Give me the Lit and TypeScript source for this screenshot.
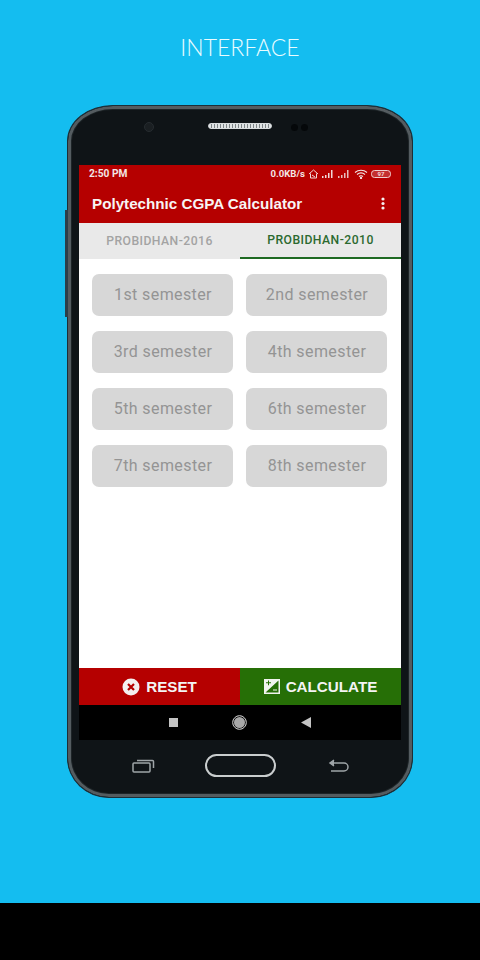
import { LitElement, html, css } from "lit";
import { customElement } from "lit/decorators.js";

const semesters = ["1st","2nd","3rd","4th","5th","6th","7th","8th"];

@customElement("app-root")
export class AppRoot extends LitElement {
  static styles = css`
    :host { display: block; width: 480px; height: 960px; font-family: Roboto, "Liberation Sans", sans-serif; overflow: hidden; }
    .page { height: 903px; background: #14bdf0; display: flex; flex-direction: column; align-items: center; }
    .foot { height: 57px; background: #000; }
    h1 { margin: 35px 0 0; font: 300 23px/25px Lato, "Open Sans", sans-serif; color: #eafcff; letter-spacing: 0; }
    .phone { position: relative; margin-top: 45px; width: 346px; height: 693px; box-sizing: border-box; border-radius: 46px 46px 42px 42px / 36px 36px 40px 40px; background: #0f1417; border: 1px solid #1d2e37; box-shadow: inset 0 0 0 3px #545c60, inset 0 0 0 4px #1d2427; display: flex; flex-direction: column; padding: 0 11px; }
    .side { position: absolute; width: 3px; background: #2c3f49; }
    .side.l { left: -3px; top: 104px; height: 107px; }
    .bezel-top { height: 59px; position: relative; display: flex; justify-content: center; }
    .cam { position: absolute; left: 65px; top: 16px; width: 10px; height: 10px; border-radius: 50%; background: #1a1f22; border: 1px solid #262c30; box-sizing: border-box; }
    .speaker { margin-top: 17px; width: 64px; height: 6px; border-radius: 3px; background: repeating-linear-gradient(90deg, #dfe3e4 0 2px, #7d8487 2px 3px); border: 1px solid #d8dcde; box-sizing: border-box; }
    .sensors { position: absolute; left: 212px; top: 18px; display: flex; gap: 3px; }
    .sensors i { width: 7px; height: 7px; border-radius: 50%; background: #05080a; }
    .screen { height: 575px; display: flex; flex-direction: column; background: #fff; }
    .status { height: 25px; background: #b50000; color: #f3e5e5; display: flex; align-items: center; justify-content: space-between; padding: 0 10px 8px; box-sizing: border-box; font-size: 10.2px; font-weight: 700; }
    .stat-r { display: flex; align-items: center; gap: 3px; font-size: 9.6px; }
    .appbar { height: 33px; background: #b50000; color: #f8f4f4; display: flex; align-items: center; justify-content: space-between; padding: 0 16px 6px 13px; box-sizing: border-box; font: 700 15.2px "Liberation Sans", sans-serif; }
    .tabs { height: 36px; display: flex; background: #e9e9e9; }
    .tab { flex: 1; display: flex; align-items: center; justify-content: center; font-size: 12.2px; font-weight: 500; letter-spacing: 0.45px; color: #a3a3a3; box-sizing: border-box; }
    .tab.on { color: #2c6a30; border-bottom: 2px solid #1f6a22; }
    .grid { flex: 1; display: grid; grid-template-columns: 141px 141px; grid-auto-rows: 42px; gap: 15px 13px; padding: 15px 13px 0; align-content: start; }
    .btn { background: #d7d7d7; border-radius: 7px; display: flex; align-items: center; justify-content: center; padding: 0 0 2px 1px; box-sizing: border-box; color: #949494; font-size: 16px; letter-spacing: 0.4px; }
    .actions { height: 37px; display: flex; }
    .act { flex: 1; display: flex; align-items: center; justify-content: center; gap: 6px; color: #f4f4f4; font: 700 15.2px "Liberation Sans", sans-serif; }
    .act.red { background: #b50000; }
    .act.green { background: #266f06; }
    .nav { height: 35px; background: #000; display: flex; align-items: center; justify-content: center; gap: 54px; box-sizing: border-box; }
    .bezel-bottom { flex: 1; display: flex; align-items: center; justify-content: center; padding-bottom: 6px; position: relative; }
    .home { width: 71px; height: 23px; border-radius: 12px; border: 2px solid #c9cdce; box-sizing: border-box; margin: 0 52px 0 50px; }
    svg { display: block; }
  `;

  render() {
    return html`
      <div class="page">
        <h1>INTERFACE</h1>
        <div class="phone">
          <span class="side l"></span>
          <div class="bezel-top">
            <span class="cam"></span><span class="speaker"></span>
            <span class="sensors"><i></i><i></i></span>
          </div>
          <div class="screen">
            <div class="status">
              <span>2:50 PM</span>
              <span class="stat-r">0.0KB/s
                <svg width="11" height="10" viewBox="0 0 11 10" fill="none" stroke="#f0d8d8" stroke-width="1"><path d="M1 5 5.500 1 10 5M2.500 4.500V9h6V4.500M4 6l3 2"/></svg>
                <svg width="13" height="8" viewBox="0 0 13 8" fill="#f0d8d8"><rect x="0" y="6" width="1.500" height="2"/><rect x="3" y="5" width="1.500" height="3"/><rect x="6" y="3" width="1.500" height="5"/><rect x="9" y="0" width="1.500" height="8"/></svg>
                <svg width="13" height="8" viewBox="0 0 13 8" fill="#e6bcbc"><rect x="0" y="6" width="1.500" height="2"/><rect x="3" y="5" width="1.500" height="3"/><rect x="6" y="3" width="1.500" height="5"/><rect x="9" y="0" width="1.500" height="8"/></svg>
                <svg width="14" height="10" viewBox="0 0 14 10" fill="none" stroke="#f3e5e5" stroke-width="1.100"><path d="M1 3.500C4.500.5 9.500.5 13 3.500M3 5.500c2.500-2 5.500-2 8 0M5 7.500c1.300-1 2.700-1 4 0"/><circle cx="7" cy="9" r=".6" fill="#f3e5e5"/></svg>
                <svg width="20" height="8" viewBox="0 0 20 8"><rect x=".5" y=".5" width="19" height="7" rx="3" fill="#c43030" stroke="#f0d0d0"/><text x="10" y="6.300" font-size="6" font-weight="700" text-anchor="middle" fill="#f3d8d8">97</text></svg>
              </span>
            </div>
            <div class="appbar">
              <span>Polytechnic CGPA Calculator</span>
              <svg width="4" height="13" viewBox="0 0 4 13" fill="#f5f0f0"><circle cx="2" cy="2" r="1.600"/><circle cx="2" cy="6.500" r="1.600"/><circle cx="2" cy="11" r="1.600"/></svg>
            </div>
            <div class="tabs">
              <div class="tab">PROBIDHAN-2016</div>
              <div class="tab on">PROBIDHAN-2010</div>
            </div>
            <div class="grid">
              ${semesters.map((s) => html`<div class="btn">${s} semester</div>`)}
            </div>
            <div class="actions">
              <div class="act red">
                <svg width="18" height="18" viewBox="0 0 18 18"><circle cx="9" cy="9" r="8.500" fill="#f4f0f0"/><path d="M6 6l6 6M12 6l-6 6" stroke="#b50000" stroke-width="2.200"/></svg>
                RESET
              </div>
              <div class="act green">
                <svg width="16" height="15" viewBox="0 0 16 15"><path fill-rule="evenodd" fill="#f0f4ee" d="M0 0H16V15H0ZM14.500 1.500 1.500 13.500H14.500ZM2 3.300V4.300H4V6.300H5V4.300H7V3.300H5V1.500H4V3.300ZM9 10.500H13V11.500H9Z"/></svg>
                CALCULATE
              </div>
            </div>
            <div class="nav">
              <svg width="9" height="9" viewBox="0 0 9 9"><rect width="9" height="9" fill="#c4c4c4"/></svg>
              <svg width="15" height="15" viewBox="0 0 15 15"><circle cx="7.500" cy="7.500" r="6.800" fill="none" stroke="#ddd" stroke-width="1"/><circle cx="7.500" cy="7.500" r="5.500" fill="#a8a8a8"/></svg>
              <svg width="10" height="11" viewBox="0 0 10 11"><path d="M10 0V11L0 5.500Z" fill="#c4c4c4"/></svg>
            </div>
          </div>
          <div class="bezel-bottom">
            <svg width="23" height="15" viewBox="0 0 23 15" fill="none" stroke="#9fa5a8" stroke-width="1.500"><rect x="1" y="5" width="17" height="9" rx="1"/><path d="M5 2.500H20.500a1 1 0 0 1 1 1V10"/></svg>
            <div class="home"></div>
            <svg width="21" height="14" viewBox="0 0 21 14" fill="none" stroke="#9fa5a8" stroke-width="1.500"><path d="M2 4H16a3.500 3.500 0 0 1 0 8H3"/><path d="M6 1 2 4 6 7" fill="#9fa5a8"/></svg>
          </div>
        </div>
      </div>
      <div class="foot"></div>
    `;
  }
}
